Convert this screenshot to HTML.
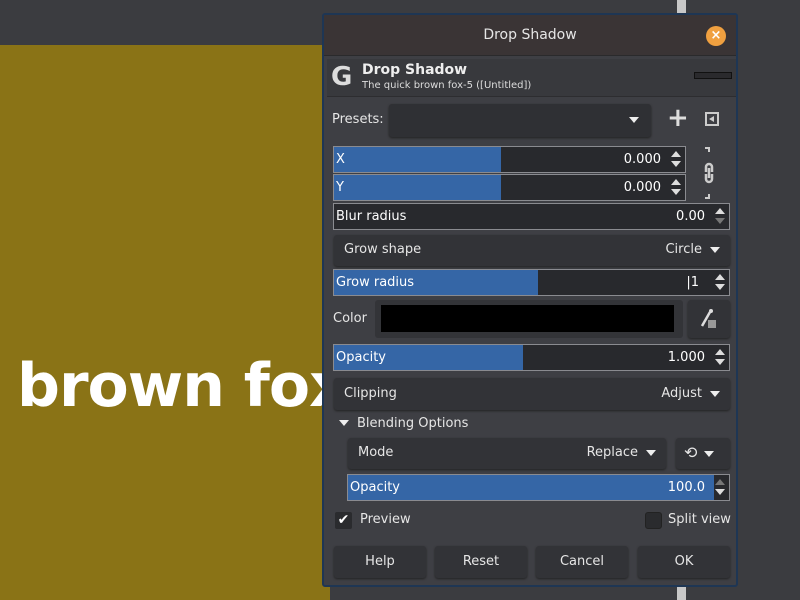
<!DOCTYPE html>
<html><head><style>
*{margin:0;padding:0;box-sizing:border-box}
body{width:800px;height:600px;overflow:hidden;background:#3b3c40;font-family:"DejaVu Sans","Liberation Sans",sans-serif;color:#e6e6e6;position:relative;font-size:13px}
.a{position:absolute}
.canvas{left:0;top:45px;width:330px;height:555px;background:#8a7316;overflow:hidden}
.fox{left:17px;top:306px;font:bold 60px "DejaVu Sans",sans-serif;color:#fff;letter-spacing:-1px;white-space:nowrap}
.vbar{left:677px;width:9px;background:#c8c8c8}
.dlg{left:322px;top:13px;width:416px;height:574px;background:#3e3f44;border:2px solid #1e3654;border-radius:3px;overflow:hidden}
.title{left:0;top:0;width:412px;height:41px;background:#3a3435;border-bottom:1px solid #2a2a2c;text-align:center;line-height:41px;font-size:14px}
.close{left:382px;top:11px;width:20px;height:20px;border-radius:50%;background:#f0a040;color:#fff;font-size:13px;font-weight:bold;text-align:center;line-height:20px}
.hdr{left:3px;top:44px;width:409px;height:38px;background:#38393d;border-bottom:1px solid #2d2d30}
.fld{position:absolute;background:#28292d;border:1px solid #8a8b90;height:27px;line-height:25px;font-size:13px;overflow:hidden}
.fill{position:absolute;left:0;top:0;bottom:0;background:#3566a6}
.lbl{position:absolute;left:2px;top:0;color:#fff}
.val{position:absolute;right:24px;top:0;color:#fff}
.sp{position:absolute;right:4px;top:3px;width:10px;height:18px}
.btn{position:absolute;background:#323337;border-radius:3px;box-shadow:0 1px 2px #222;line-height:30px;font-size:13px}
.dd{display:inline-block;width:0;height:0;border-left:5px solid transparent;border-right:5px solid transparent;border-top:6px solid #eee;vertical-align:middle;margin-left:8px}
</style></head><body>
<div class="a" style="left:0;top:0;width:800px;height:48px;background:#3b3c40"></div>
<div class="a canvas"><div class="a fox">brown fox</div></div>
<div class="a vbar" style="top:0;height:14px"></div>
<div class="a vbar" style="top:586px;height:14px"></div>

<div class="a dlg">
 <div class="a title">Drop Shadow</div>
 <div class="a close">×</div>
 <div class="a hdr">
  <div class="a" style="left:4px;top:3px;font:bold 26px 'DejaVu Sans',sans-serif;color:#ddd">G</div>
  <div class="a" style="left:35px;top:3px;font-size:14px;font-weight:bold;color:#eee">Drop Shadow</div>
  <div class="a" style="left:35px;top:21px;font-size:10px;color:#ddd">The quick brown fox-5 ([Untitled])</div>
  <div class="a" style="left:367px;top:13px;width:38px;height:7px;border:1px solid #111;background:#2a2a2d"></div>
 </div>
 <div class="a" style="left:8px;top:97px;font-size:13px">Presets:</div>
 <div class="btn" style="left:65px;top:89px;width:262px;height:33px;background:#2f3034"><span class="dd" style="position:absolute;right:12px;top:13px"></span></div>
 <div class="a" style="left:343px;top:88px;font-size:26px;font-weight:bold;color:#ddd">+</div>
 <div class="a" style="left:381px;top:97px;width:14px;height:14px;border:2px solid #ccc"><div class="a" style="left:2px;top:2px;border-top:3px solid transparent;border-bottom:3px solid transparent;border-right:5px solid #ccc"></div></div>

 <div class="fld" style="left:9px;top:131px;width:353px"><div class="fill" style="width:167px"></div><span class="lbl">X</span><span class="val">0.000</span><svg class="sp" viewBox="0 0 10 18"><path d="M0 7L5 1L10 7Z M0 11L5 17L10 11Z" fill="#ddd"/></svg></div>
 <div class="fld" style="left:9px;top:159px;width:353px"><div class="fill" style="width:167px"></div><span class="lbl">Y</span><span class="val">0.000</span><svg class="sp" viewBox="0 0 10 18"><path d="M0 7L5 1L10 7Z M0 11L5 17L10 11Z" fill="#ddd"/></svg></div>
 <svg class="a" style="left:376px;top:131px" width="20" height="54" viewBox="0 0 20 54"><path d="M5 2h4v4 M5 52h4v-4" stroke="#ccc" stroke-width="2" fill="none"/><path d="M6 26v-5a3 3 0 0 1 6 0v5 M6 28v5a3 3 0 0 0 6 0v-5 M9 22v10" stroke="#ccc" stroke-width="2.5" fill="none"/></svg>

 <div class="fld" style="left:9px;top:188px;width:397px"><span class="lbl">Blur radius</span><span class="val">0.00</span><svg class="sp" viewBox="0 0 10 18"><path d="M0 7L5 1L10 7Z" fill="#ddd"/><path d="M0 11L5 17L10 11Z" fill="#777"/></svg></div>
 <div class="btn" style="left:10px;top:220px;width:396px;height:31px"><span style="position:absolute;left:10px">Grow shape</span><span style="position:absolute;right:10px">Circle<span class="dd"></span></span></div>
 <div class="fld" style="left:9px;top:254px;width:397px"><div class="fill" style="width:204px"></div><span class="lbl">Grow radius</span><span class="val" style="right:30px">|1</span><svg class="sp" viewBox="0 0 10 18"><path d="M0 7L5 1L10 7Z M0 11L5 17L10 11Z" fill="#ddd"/></svg></div>
 <div class="a" style="left:9px;top:296px">Color</div>
 <div class="a" style="left:51px;top:285px;width:308px;height:38px;background:#333438;border-radius:3px"><div class="a" style="left:6px;top:5px;width:293px;height:27px;background:#000"></div></div>
 <div class="btn" style="left:364px;top:285px;width:42px;height:38px"><svg class="a" style="left:11px;top:8px" width="20" height="22" viewBox="0 0 20 22"><path d="M3 18L11 4" stroke="#ddd" stroke-width="2.5"/><circle cx="12" cy="3" r="2" fill="#ddd"/><rect x="9" y="12" width="8" height="8" fill="#999"/></svg></div>
 <div class="fld" style="left:9px;top:329px;width:397px"><div class="fill" style="width:189px"></div><span class="lbl">Opacity</span><span class="val">1.000</span><svg class="sp" viewBox="0 0 10 18"><path d="M0 7L5 1L10 7Z M0 11L5 17L10 11Z" fill="#ddd"/></svg></div>
 <div class="btn" style="left:10px;top:363px;width:396px;height:32px;line-height:32px"><span style="position:absolute;left:10px">Clipping</span><span style="position:absolute;right:10px">Adjust<span class="dd"></span></span></div>
 <div class="a" style="left:15px;top:405px;border-left:5px solid transparent;border-right:5px solid transparent;border-top:6px solid #eee"></div>
 <div class="a" style="left:33px;top:401px">Blending Options</div>
 <div class="btn" style="left:24px;top:423px;width:318px;height:31px"><span style="position:absolute;left:10px">Mode</span><span style="position:absolute;right:10px">Replace<span class="dd"></span></span></div>
 <div class="btn" style="left:352px;top:423px;width:54px;height:31px"><span style="position:absolute;left:8px;font-size:16px">⟲</span><span class="dd" style="position:absolute;left:28px;top:13px;margin:0"></span></div>
 <div class="fld" style="left:23px;top:459px;width:383px"><div class="fill" style="width:366px"></div><span class="lbl">Opacity</span><span class="val">100.0</span><svg class="sp" viewBox="0 0 10 18"><path d="M0 7L5 1L10 7Z" fill="#777"/><path d="M0 11L5 17L10 11Z" fill="#ddd"/></svg></div>
 <div class="a" style="left:11px;top:497px;width:17px;height:17px;background:#2a2b2e;border-radius:2px;color:#fff;font-size:14px;line-height:17px;text-align:center">✔</div>
 <div class="a" style="left:36px;top:497px">Preview</div>
 <div class="a" style="left:321px;top:497px;width:17px;height:17px;background:#2a2b2e;border:1px solid #222;border-radius:3px"></div>
 <div class="a" style="left:344px;top:497px">Split view</div>
 <div class="btn" style="left:10px;top:531px;width:92px;height:32px;text-align:center;line-height:32px">Help</div>
 <div class="btn" style="left:111px;top:531px;width:92px;height:32px;text-align:center;line-height:32px">Reset</div>
 <div class="btn" style="left:212px;top:531px;width:92px;height:32px;text-align:center;line-height:32px">Cancel</div>
 <div class="btn" style="left:314px;top:531px;width:92px;height:32px;text-align:center;line-height:32px">OK</div>
</div>
</body></html>
